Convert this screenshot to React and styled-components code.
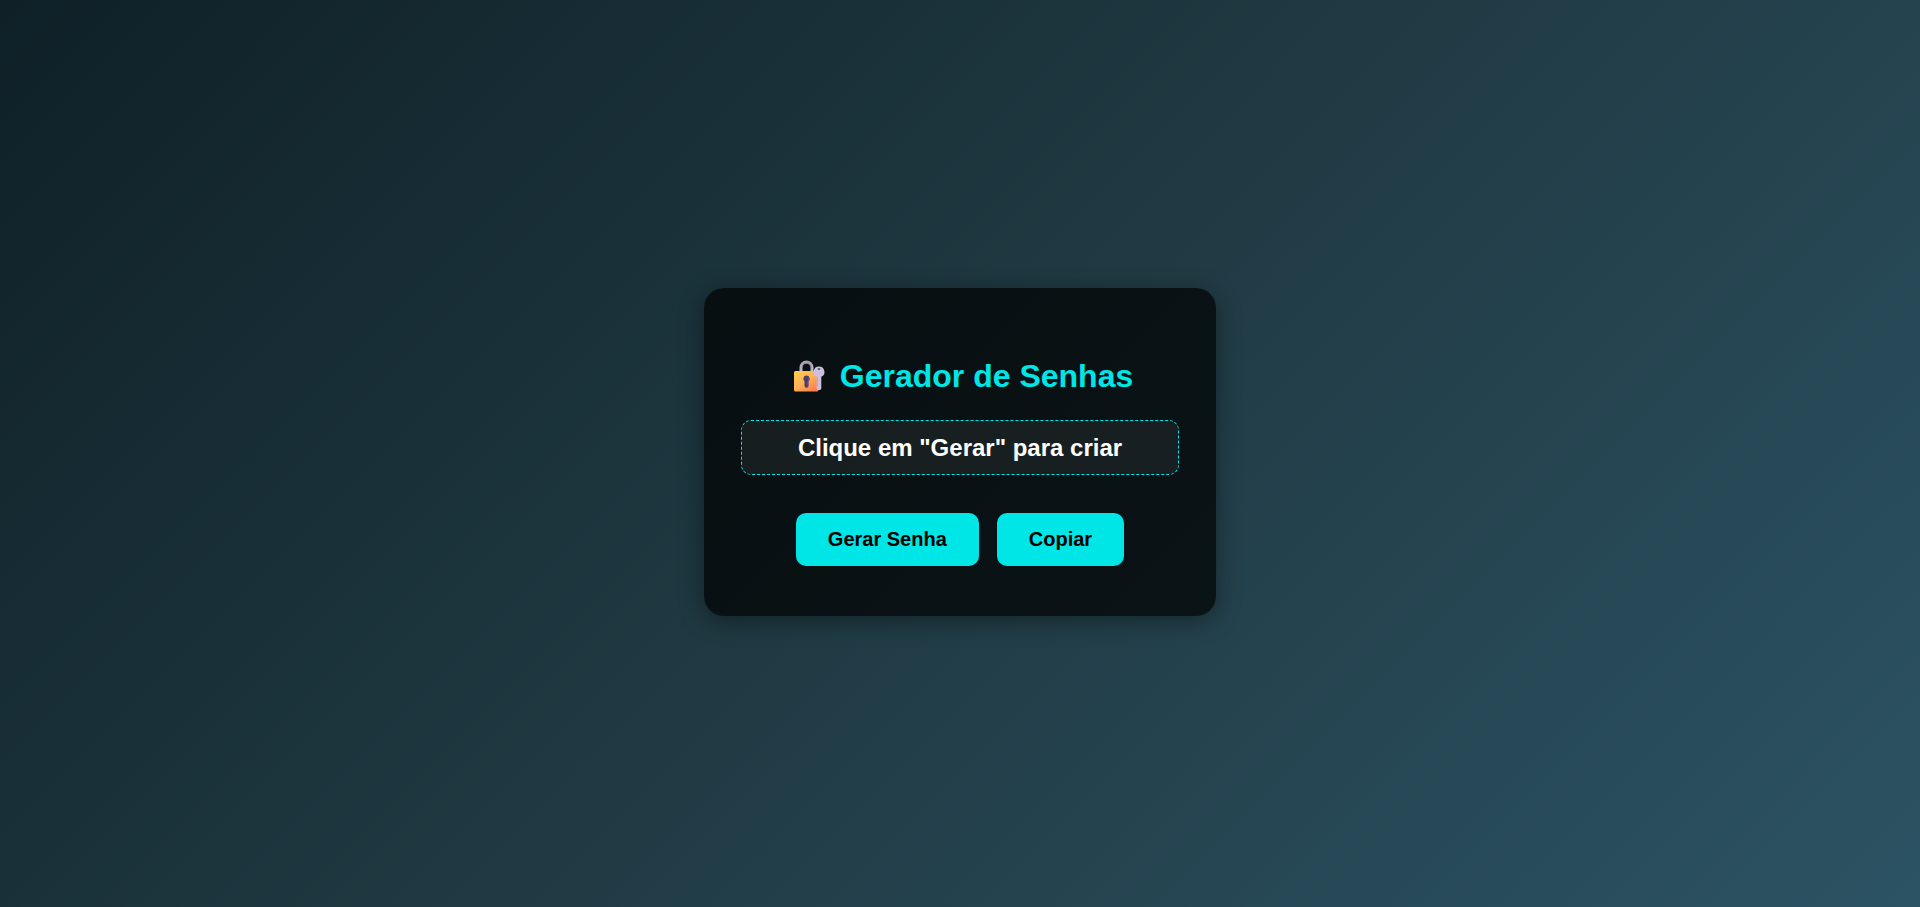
import React, { useState } from "react";
import styled, { createGlobalStyle } from "styled-components";

const GlobalStyle = createGlobalStyle`
  *, *::before, *::after { box-sizing: border-box; }
  body {
    margin: 0;
    font-family: Arial, "Liberation Sans", sans-serif;
    color: #fff;
  }
`;

const Page = styled.main`
  min-height: 100vh;
  display: flex;
  align-items: center;
  justify-content: center;
  padding: 0 16px 3px;
  background: linear-gradient(135deg, #0f2027, #203a43, #2c5364);
`;

const Card = styled.section`
  width: 100%;
  max-width: 512px;
  padding: 70px 37px 50px;
  border-radius: 20px;
  background: rgba(0, 0, 0, 0.7);
  box-shadow: 0 5px 24px rgba(0, 0, 0, 0.4);
  text-align: center;
`;

const Title = styled.h1`
  display: flex;
  align-items: center;
  justify-content: center;
  gap: 14px;
  margin: 0 0 25px;
  font-size: 32px;
  line-height: 37px;
  font-weight: 700;
  color: #00e6e6;
`;

const LockIcon = styled.svg`
  width: 39px;
  height: 34px;
  flex: none;
`;

const Password = styled.output`
  display: block;
  margin-bottom: 38px;
  padding: 12px;
  border: 1px dashed #00e6e6;
  border-radius: 10px;
  background: rgba(255, 255, 255, 0.06);
  font-size: 24px;
  line-height: 29px;
  font-weight: 700;
  overflow-wrap: anywhere;
`;

const Actions = styled.div`
  display: flex;
  flex-wrap: wrap;
  justify-content: center;
  gap: 18px;
`;

const Button = styled.button`
  padding: 15px 32px;
  border: 0;
  border-radius: 10px;
  background: #00e6e6;
  color: #000;
  font: inherit;
  font-size: 20px;
  line-height: 23px;
  font-weight: 700;
  cursor: pointer;
`;

const CHARS = "ABCDEFGHIJKLMNOPQRSTUVWXYZabcdefghijklmnopqrstuvwxyz0123456789!@#$%&*";

function createPassword(length = 12) {
  const values = crypto.getRandomValues(new Uint32Array(length));
  return Array.from(values, (v) => CHARS[v % CHARS.length]).join("");
}

function LockWithKey() {
  return (
    <LockIcon viewBox="-6 0 39 34" aria-hidden="true">
      <defs>
        <linearGradient id="lockBody" x1="0" y1="0" x2="0.8" y2="1">
          <stop offset="0" stopColor="#ffce48" />
          <stop offset="0.5" stopColor="#ffb456" />
          <stop offset="1" stopColor="#fb7d50" />
        </linearGradient>
        <linearGradient id="shackle" x1="0" y1="0" x2="0" y2="1">
          <stop offset="0" stopColor="#aaa0b0" />
          <stop offset="1" stopColor="#c8bdcf" />
        </linearGradient>
      </defs>
      <path d="M8 13V7.5a5.5 5.5 0 0 1 11 0V13" fill="none" stroke="url(#shackle)" strokeWidth="3" />
      <path d="M9 7.8a4.5 4.5 0 0 1 9 0" fill="none" stroke="#8f7b9b" strokeWidth="1" />
      <rect x="1" y="11" width="24.5" height="20.5" rx="1.5" fill="url(#lockBody)" />
      <path d="M13.5 15.5a3.2 3.2 0 0 0-2 5.7v4.6a2 2 0 0 0 4 0v-4.6a3.2 3.2 0 0 0-2-5.7Z" fill="#4b3e68" />
      <path d="M14.8 18a2 2 0 0 1 0 3.5v4" fill="none" stroke="#6b5472" strokeWidth="1" />
      <path fillRule="evenodd" d="M26 6.5a5.4 5.4 0 0 0-2.3 10.3v11.4a1.7 1.7 0 0 0 1.7 1.7h1.2a1.7 1.7 0 0 0 1.7-1.7V16.8A5.4 5.4 0 0 0 26 6.5Z" fill="#cbbfdd" />
      <ellipse cx="26" cy="9" rx="1.3" ry="0.7" fill="#241f2c" />
      <path d="M24.4 17v10" fill="none" stroke="#b3a6c6" strokeWidth="1" />
    </LockIcon>
  );
}

export default function App() {
  const [password, setPassword] = useState("");

  return (
    <>
      <GlobalStyle />
      <Page>
        <Card>
          <Title>
            <LockWithKey />
            Gerador de Senhas
          </Title>
          <Password>{password || 'Clique em "Gerar" para criar'}</Password>
          <Actions>
            <Button type="button" onClick={() => setPassword(createPassword())}>
              Gerar Senha
            </Button>
            <Button type="button" onClick={() => navigator.clipboard?.writeText(password)}>
              Copiar
            </Button>
          </Actions>
        </Card>
      </Page>
    </>
  );
}
